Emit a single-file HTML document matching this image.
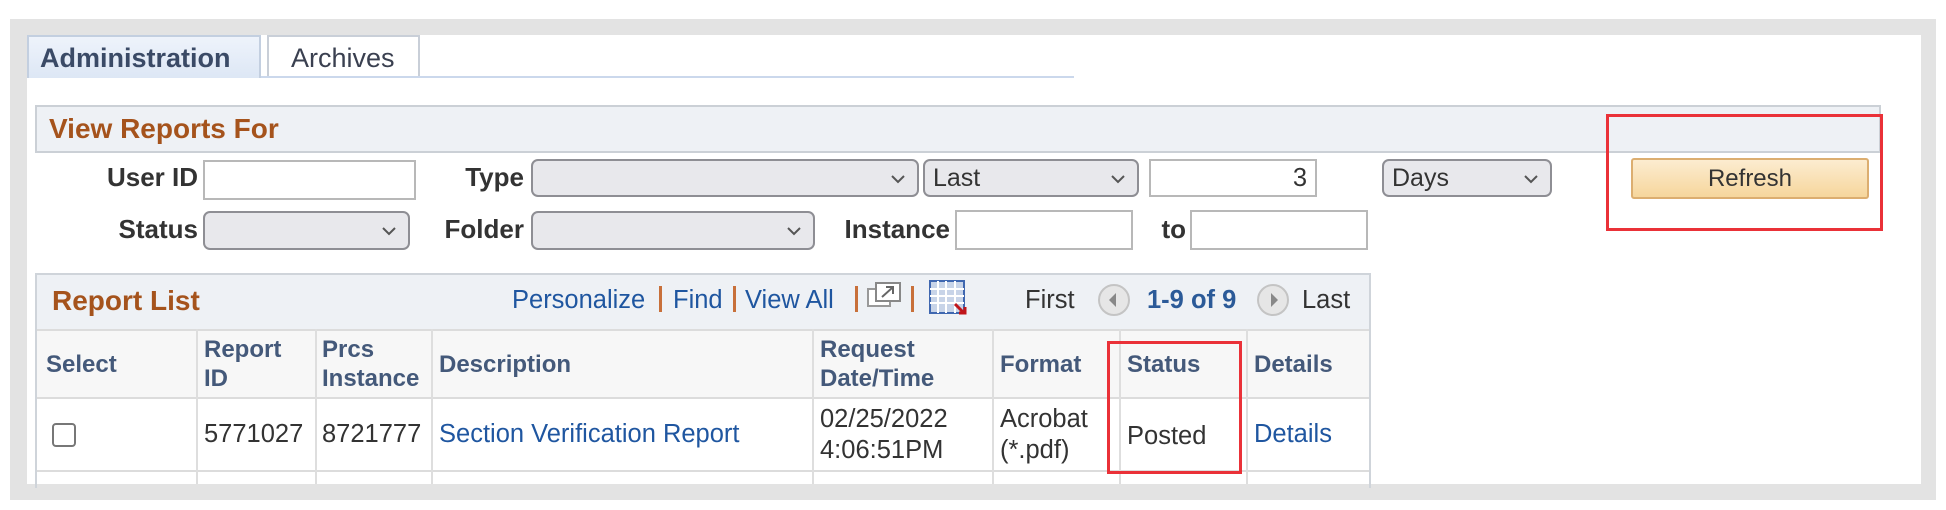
<!DOCTYPE html>
<html><head><meta charset="utf-8">
<style>
*{margin:0;padding:0;box-sizing:border-box}
body{width:1946px;height:510px;background:#fff;position:relative;overflow:hidden;font-family:"Liberation Sans",Arial,sans-serif;color:#333}
.a{position:absolute}
.lbl{position:absolute;font-weight:bold;font-size:26px;color:#333;line-height:30px;text-align:right}
.inp{position:absolute;background:#fff;border:2px solid #b8b8b8}
.sel{position:absolute;background:#e8e8ec;border:2px solid #8e8e94;border-radius:7px;font-size:25px;line-height:34px;padding-left:8px;color:#333}
.sel svg{position:absolute;right:12px;top:13px}
.vl{position:absolute;top:329px;height:155px;width:2px;background:#dedede}
.hd{position:absolute;font-weight:bold;font-size:24px;line-height:29px;color:#44597a}
.dt{position:absolute;font-size:25.5px;line-height:31px;color:#333}
.lk{color:#1f56a0}
.sep{position:absolute;top:286px;width:3px;height:26px;background:#c8703a}
</style></head><body>
<div class="a" style="left:10px;top:19px;width:1926px;height:481px;background:#e3e3e3"></div>
<div class="a" style="left:27px;top:35px;width:1894px;height:449px;background:#fff"></div>

<div class="a" style="left:27px;top:35px;width:234px;height:43px;background:linear-gradient(#eef3fb,#dde7f5);border:2px solid #c3cfe0;border-bottom:none"></div>
<div class="a" style="left:40px;top:41px;font-size:27px;font-weight:bold;color:#3a4a66;line-height:34px">Administration</div>
<div class="a" style="left:267px;top:35px;width:153px;height:43px;background:#fff;border:2px solid #c9cfd8;border-bottom:none"></div>
<div class="a" style="left:291px;top:41px;font-size:27px;color:#3a4050;line-height:34px">Archives</div>
<div class="a" style="left:261px;top:76px;width:813px;height:2px;background:#cbd8ec"></div>

<div class="a" style="left:35px;top:105px;width:1846px;height:48px;background:#eef1f5;border:2px solid #cbd0d6"></div>
<div class="a" style="left:49px;top:112px;font-size:28px;font-weight:bold;color:#a5531c;line-height:34px">View Reports For</div>

<div class="lbl" style="left:90px;top:162px;width:108px">User ID</div>
<div class="inp" style="left:203px;top:160px;width:213px;height:40px"></div>
<div class="lbl" style="left:430px;top:162px;width:94px">Type</div>
<div class="sel" style="left:531px;top:159px;width:388px;height:38px"><svg width="14" height="10"><polyline points="1,2 7,8 13,2" fill="none" stroke="#555" stroke-width="2"/></svg></div>
<div class="sel" style="left:923px;top:159px;width:216px;height:38px">Last<svg width="14" height="10"><polyline points="1,2 7,8 13,2" fill="none" stroke="#555" stroke-width="2"/></svg></div>
<div class="inp" style="left:1149px;top:159px;width:168px;height:38px;font-size:25.5px;text-align:right;padding-right:8px;line-height:34px">3</div>
<div class="sel" style="left:1382px;top:159px;width:170px;height:38px">Days<svg width="14" height="10"><polyline points="1,2 7,8 13,2" fill="none" stroke="#555" stroke-width="2"/></svg></div>

<div class="lbl" style="left:90px;top:214px;width:108px">Status</div>
<div class="sel" style="left:203px;top:211px;width:207px;height:39px"><svg width="14" height="10"><polyline points="1,2 7,8 13,2" fill="none" stroke="#555" stroke-width="2"/></svg></div>
<div class="lbl" style="left:430px;top:214px;width:94px">Folder</div>
<div class="sel" style="left:531px;top:211px;width:284px;height:39px"><svg width="14" height="10"><polyline points="1,2 7,8 13,2" fill="none" stroke="#555" stroke-width="2"/></svg></div>
<div class="lbl" style="left:835px;top:214px;width:115px">Instance</div>
<div class="inp" style="left:955px;top:210px;width:178px;height:40px"></div>
<div class="lbl" style="left:1152px;top:214px;width:34px">to</div>
<div class="inp" style="left:1190px;top:210px;width:178px;height:40px"></div>

<div class="a" style="left:1631px;top:158px;width:238px;height:41px;background:linear-gradient(#fcecd0,#f6d69c);border:2px solid #dcae70;border-radius:3px;font-size:24px;line-height:37px;text-align:center;color:#333">Refresh</div>
<div class="a" style="left:1606px;top:114px;width:277px;height:117px;border:3px solid #ea3138"></div>

<div class="a" style="left:35px;top:273px;width:1336px;height:215px;border:2px solid #cfd4da;border-bottom:none"></div>
<div class="a" style="left:37px;top:275px;width:1332px;height:54px;background:#eef1f5"></div>
<div class="a" style="left:37px;top:329px;width:1332px;height:68px;background:#f7f7f7;border-top:2px solid #dcdcdc"></div>
<div class="a" style="left:37px;top:397px;width:1332px;height:75px;background:#fff;border-top:2px solid #dcdcdc;border-bottom:2px solid #dcdcdc"></div>
<div class="vl" style="left:196px"></div>
<div class="vl" style="left:315px"></div>
<div class="vl" style="left:431px"></div>
<div class="vl" style="left:812px"></div>
<div class="vl" style="left:992px"></div>
<div class="vl" style="left:1119px"></div>
<div class="vl" style="left:1246px"></div>

<div class="a" style="left:52px;top:284px;font-size:28px;font-weight:bold;color:#a5531c;line-height:34px">Report List</div>
<div class="a lk" style="left:512px;top:284px;font-size:25.5px;line-height:32px">Personalize</div>
<div class="sep" style="left:659px"></div>
<div class="a lk" style="left:673px;top:284px;font-size:25.5px;line-height:32px">Find</div>
<div class="sep" style="left:733px"></div>
<div class="a lk" style="left:745px;top:284px;font-size:25.5px;line-height:32px">View All</div>
<div class="sep" style="left:855px"></div>
<svg class="a" style="left:867px;top:282px" width="36" height="26"><rect x="1" y="7" width="22" height="17" fill="#fff" stroke="#999" stroke-width="2"/><rect x="9" y="1" width="24" height="18" fill="#fff" stroke="#888" stroke-width="2"/><path d="M15 15 L25 6 M19 5 H26 V12" stroke="#666" stroke-width="2" fill="none"/></svg>
<div class="sep" style="left:911px"></div>
<svg class="a" style="left:929px;top:280px" width="40" height="36"><rect x="1" y="1" width="34" height="32" fill="#c8d4e8" stroke="#3f67b0" stroke-width="2"/><path d="M1 9H35M1 16H35M1 23H35M9 1V33M17 1V33M26 1V33" stroke="#fff" stroke-width="2"/><path d="M26 24 L35 33 M30 33 H36 V27" stroke="#c0151a" stroke-width="3" fill="none"/></svg>
<div class="a" style="left:1025px;top:284px;font-size:25.5px;line-height:32px;color:#333">First</div>
<svg class="a" style="left:1097px;top:284px" width="34" height="32"><ellipse cx="17" cy="16" rx="15" ry="15" fill="#e6e6e6" stroke="#c4c4c4" stroke-width="2"/><path d="M19 9 L12 16 L19 23Z" fill="#888"/></svg>
<div class="a lk" style="left:1147px;top:284px;font-size:25.5px;line-height:32px;font-weight:bold;color:#2b5a98">1-9 of 9</div>
<svg class="a" style="left:1256px;top:284px" width="34" height="32"><ellipse cx="17" cy="16" rx="15" ry="15" fill="#e6e6e6" stroke="#c4c4c4" stroke-width="2"/><path d="M15 9 L22 16 L15 23Z" fill="#888"/></svg>
<div class="a" style="left:1302px;top:284px;font-size:25.5px;line-height:32px;color:#333">Last</div>

<div class="hd" style="left:46px;top:350px">Select</div>
<div class="hd" style="left:204px;top:335px">Report<br>ID</div>
<div class="hd" style="left:322px;top:335px">Prcs<br>Instance</div>
<div class="hd" style="left:439px;top:350px">Description</div>
<div class="hd" style="left:820px;top:335px">Request<br>Date/Time</div>
<div class="hd" style="left:1000px;top:350px">Format</div>
<div class="hd" style="left:1127px;top:350px">Status</div>
<div class="hd" style="left:1254px;top:350px">Details</div>

<div class="a" style="left:52px;top:423px;width:24px;height:24px;border:2px solid #777;border-radius:4px;background:#fff"></div>
<div class="dt" style="left:204px;top:419px">5771027</div>
<div class="dt" style="left:322px;top:419px">8721777</div>
<div class="dt lk" style="left:439px;top:419px">Section Verification Report</div>
<div class="dt" style="left:820px;top:404px">02/25/2022<br>4:06:51PM</div>
<div class="dt" style="left:1000px;top:404px">Acrobat<br>(*.pdf)</div>
<div class="dt" style="left:1127px;top:421px">Posted</div>
<div class="dt lk" style="left:1254px;top:419px">Details</div>

<div class="a" style="left:1107px;top:341px;width:135px;height:133px;border:3px solid #ea3138"></div>
</body></html>
